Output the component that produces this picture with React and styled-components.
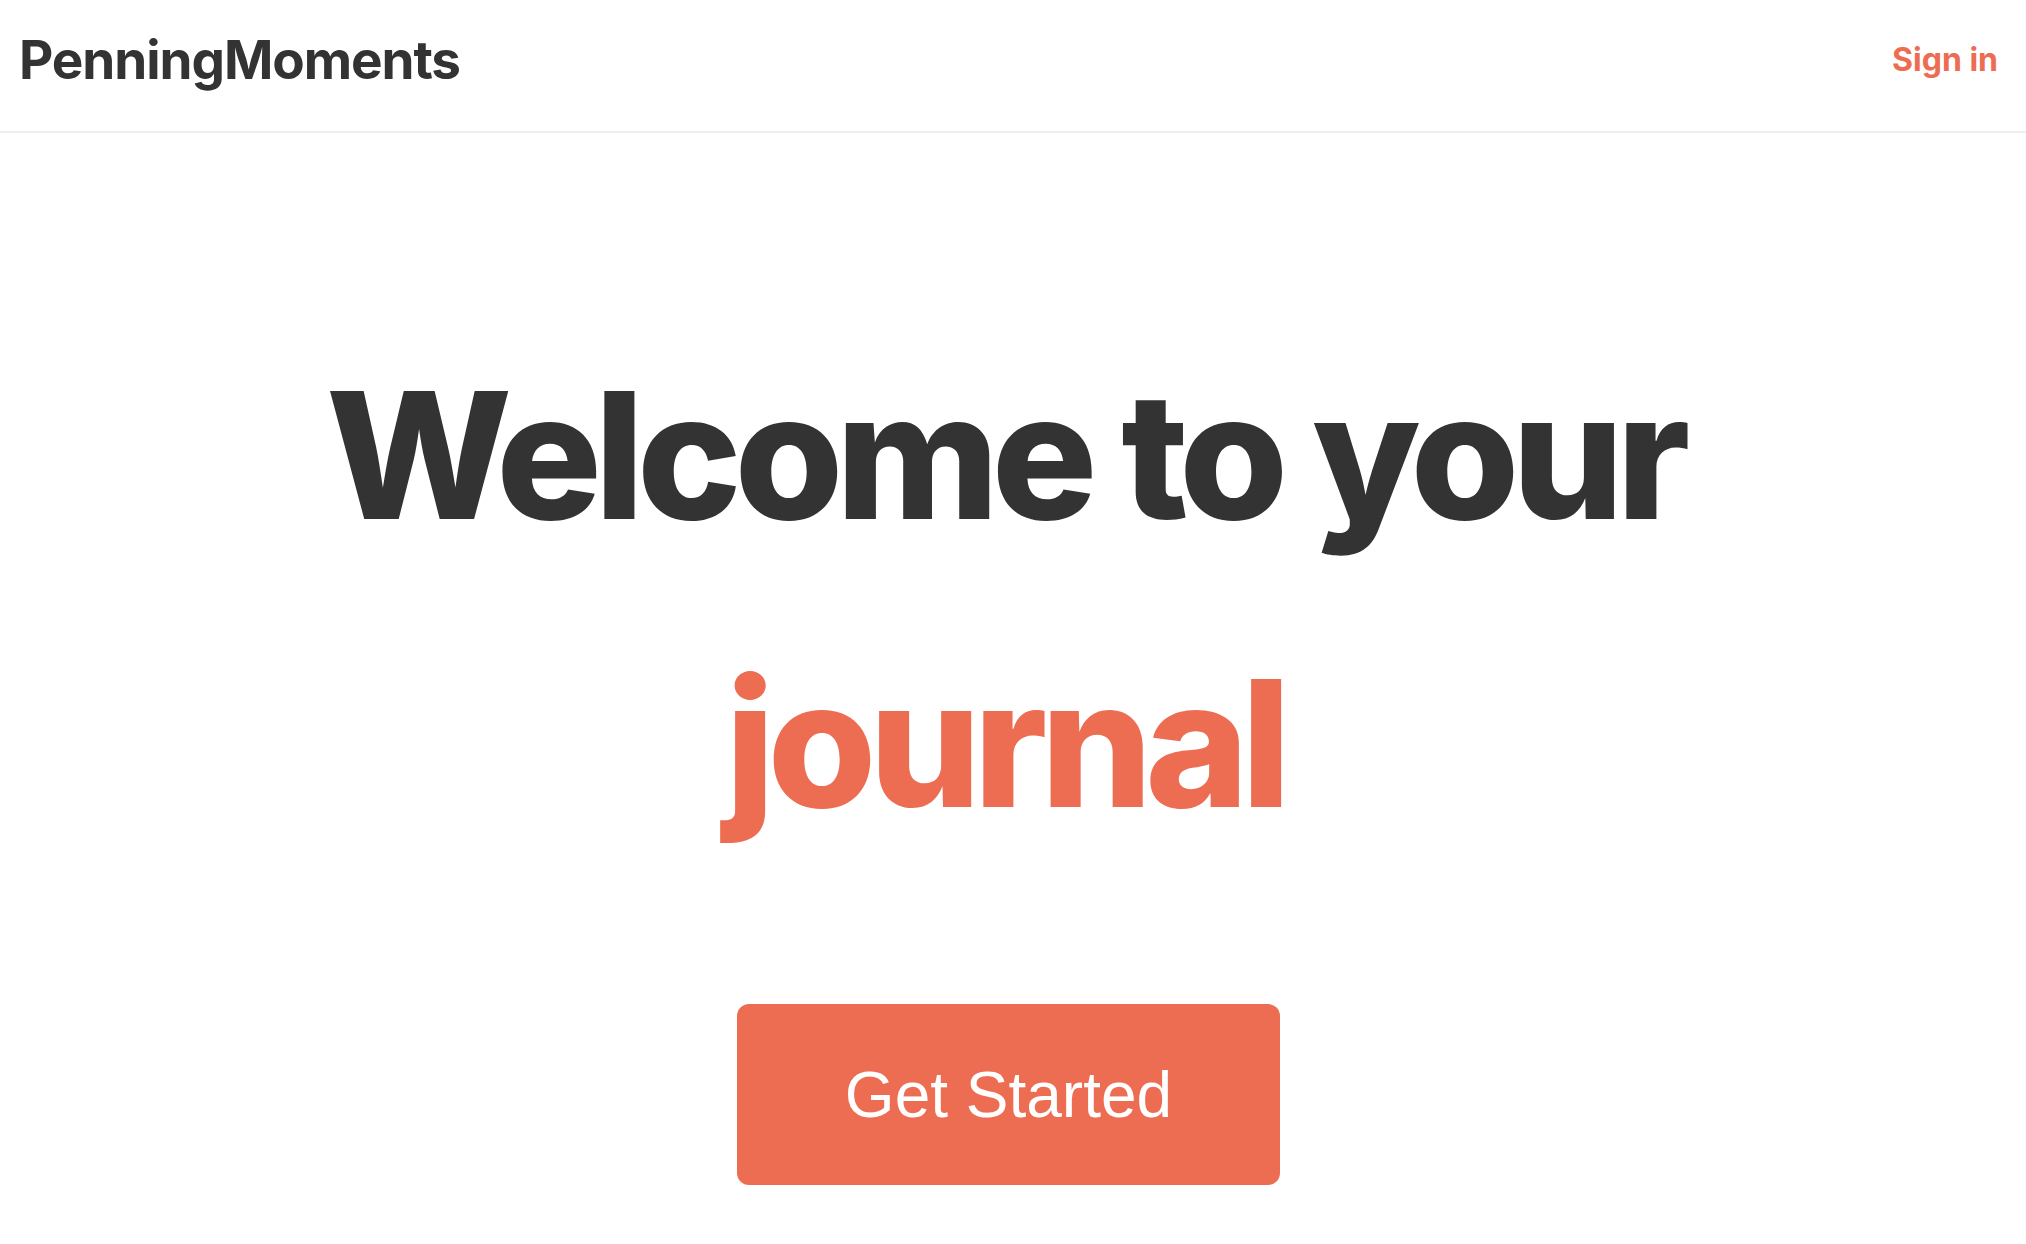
import React from 'react'
import styled, { createGlobalStyle } from 'styled-components'

const GlobalStyle = createGlobalStyle`
  html, body {
    margin: 0;
    padding: 0;
    background: #ffffff;
    font-family: Inter, "Noto Sans", sans-serif;
    color: #333333;
  }
`

const coral = '#ed6d52'

const Header = styled.header`
  box-sizing: border-box;
  height: 133px;
  padding: 0 28px 12px 19px;
  display: flex;
  align-items: center;
  justify-content: space-between;
  border-bottom: 2px solid #eeeeee;
`

const Logo = styled.a`
  font-family: Inter, sans-serif;
  font-size: 53px;
  font-weight: 700;
  letter-spacing: -0.02em;
  color: #333333;
  text-decoration: none;
`

const NavLink = styled.a`
  font-family: Inter, sans-serif;
  font-size: 32px;
  font-weight: 700;
  color: ${coral};
  text-decoration: none;
  cursor: pointer;
`

const Hero = styled.main`
  display: flex;
  flex-direction: column;
  align-items: center;
  padding: 178px 0 0 0;
`

const Title = styled.h1`
  margin: 0 17px 0 0;
  font-family: Inter, sans-serif;
  font-size: 176px;
  font-weight: 800;
  line-height: 288px;
  letter-spacing: -0.042em;
  text-align: center;
  color: #333333;
`

const Accent = styled.span`
  display: block;
  color: ${coral};
`

const CtaButton = styled.button`
  margin: 117px 9px 0 0;
  width: 543px;
  height: 181px;
  border: none;
  border-radius: 12px;
  background: ${coral};
  color: #ffffff;
  font-family: "Liberation Sans", Arial, sans-serif;
  font-size: 64px;
  font-weight: 400;
  cursor: pointer;
`

export default function App() {
  return (
    <>
      <GlobalStyle />
      <Header>
        <Logo href="#">PenningMoments</Logo>
        <NavLink>Sign in</NavLink>
      </Header>
      <Hero>
        <Title>
          Welcome to your
          <Accent>journal</Accent>
        </Title>
        <CtaButton>Get Started</CtaButton>
      </Hero>
    </>
  )
}
